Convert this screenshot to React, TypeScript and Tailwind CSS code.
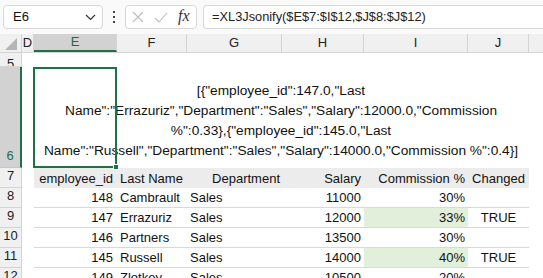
import React from "react";

const cols = [
  { key: "D", w: "w-[12px]" },
  { key: "E", w: "w-[83px]" },
  { key: "F", w: "w-[70px]" },
  { key: "G", w: "w-[95px]" },
  { key: "H", w: "w-[82px]" },
  { key: "I", w: "w-[104px]" },
  { key: "J", w: "w-[61px]" },
];

interface Row {
  n: number;
  id: string;
  last: string;
  dept: string;
  salary: string;
  pct: string;
  changed: string;
}

const rows: Row[] = [
  { n: 8, id: "148", last: "Cambrault", dept: "Sales", salary: "11000", pct: "30%", changed: "" },
  { n: 9, id: "147", last: "Errazuriz", dept: "Sales", salary: "12000", pct: "33%", changed: "TRUE" },
  { n: 10, id: "146", last: "Partners", dept: "Sales", salary: "13500", pct: "30%", changed: "" },
  { n: 11, id: "145", last: "Russell", dept: "Sales", salary: "14000", pct: "40%", changed: "TRUE" },
  { n: 12, id: "149", last: "Zlotkey", dept: "Sales", salary: "10500", pct: "20%", changed: "" },
];

const jsonLines = [
  '[{"employee_id":147.0,"Last',
  'Name":"Errazuriz","Department":"Sales","Salary":12000.0,"Commission',
  '%":0.33},{"employee_id":145.0,"Last',
  'Name":"Russell","Department":"Sales","Salary":14000.0,"Commission %":0.4}]',
];

function RowHead({ n, h, selected }: { n: number; h: string; selected?: boolean }) {
  return (
    <div
      className={`w-[22px] shrink-0 ${h} flex items-end justify-center pb-[2px] border-b border-r ${
        selected
          ? "bg-[#d2d2d2] text-[#1e6c41] border-b-[#c6c6c6] border-r-2 border-r-[#1e7145]"
          : "bg-[#f0f0f0] text-[#222] border-[#d4d4d4]"
      }`}
    >
      {n}
    </div>
  );
}

export default function App() {
  return (
    <div
      className="w-[543px] h-[278px] overflow-hidden bg-white text-[13px] text-[#111]"
      style={{ fontFamily: '"Liberation Sans", Arial, sans-serif' }}
    >
      {/* formula bar */}
      <div className="h-[34px] flex items-center bg-[#fafafa]">
        <div className="ml-[3px] w-[100px] h-[24px] border border-[#d8d8d8] rounded-[4px] bg-white flex items-center justify-between pl-[9px] pr-[6px]">
          <span>E6</span>
          <svg width="11" height="7" viewBox="0 0 11 7" fill="none" stroke="#333" strokeWidth="1.2">
            <path d="M1 1l4.5 4.5L10 1" />
          </svg>
        </div>
        <div className="w-[22px] flex flex-col items-center gap-[3px]">
          <span className="w-[2px] h-[2px] bg-[#444]" />
          <span className="w-[2px] h-[2px] bg-[#444]" />
          <span className="w-[2px] h-[2px] bg-[#444]" />
        </div>
        <div className="w-[72px] h-[24px] border border-[#d8d8d8] rounded-[4px] bg-white flex items-center pl-[6px] gap-[10px]">
          <svg width="12" height="12" viewBox="0 0 12 12" stroke="#bdbdbd" strokeWidth="1.1">
            <path d="M1 1l10 10M11 1L1 11" />
          </svg>
          <svg width="14" height="11" viewBox="0 0 14 11" fill="none" stroke="#bdbdbd" strokeWidth="1.1">
            <path d="M1 6l4 4 8-9" />
          </svg>
          <span
            className="italic text-[16px] text-[#333] -mt-[2px]"
            style={{ fontFamily: '"Liberation Serif", "Times New Roman", serif' }}
          >
            fx
          </span>
        </div>
        <div className="ml-[6px] flex-1 h-[24px] border border-r-0 border-[#d8d8d8] rounded-l-[4px] bg-white flex items-center pl-[8px] text-[12.8px] text-[#222]">
          =XL3Jsonify($E$7:$I$12,$J$8:$J$12)
        </div>
      </div>

      {/* column headers */}
      <div className="flex h-[19px] bg-[#f0f0f0] border-b border-[#d4d4d4]">
        <div className="w-[22px] shrink-0 border-r border-[#d4d4d4] flex items-end justify-end pr-[4px] pb-[2px]">
          <svg width="12" height="12" viewBox="0 0 12 12">
            <path d="M12 0V12H0Z" fill="#b5b5b5" />
          </svg>
        </div>
        {cols.map((c) => (
          <div
            key={c.key}
            className={`${c.w} shrink-0 flex items-center justify-center border-r border-[#d4d4d4] ${
              c.key === "E" ? "bg-[#d2d2d2] text-[#1e6c41] border-b-2 border-b-[#1e7145]" : "text-[#222]"
            }`}
          >
            {c.key}
          </div>
        ))}
        <div className="flex-1" />
      </div>

      {/* row 5 (partly scrolled) */}
      <div className="flex h-[14px]">
        <div className="w-[22px] shrink-0 bg-[#f0f0f0] border-r border-b border-[#d4d4d4] text-[#222] flex items-end justify-center overflow-hidden">
          <span className="leading-[13px] -mb-[4px]">5</span>
        </div>
        <div className="flex-1" />
      </div>

      {/* row 6 with JSON output */}
      <div className="flex h-[101px]">
        <RowHead n={6} h="h-[101px]" selected />
        <div className="w-[11px] shrink-0" />
        <div className="relative w-[496px] shrink-0 flex flex-col justify-end items-center pb-[7px] leading-[20px] text-[13.7px]">
          {jsonLines.map((l, i) => (
            <div key={i} className="whitespace-nowrap">
              {l}
            </div>
          ))}
          <div className="absolute left-0 top-0 w-[84px] h-[101px] border-2 border-[#1e7145]" />
          <div className="absolute left-[80px] top-[97px] w-[6px] h-[6px] bg-[#1e7145] border border-white" />
        </div>
      </div>

      {/* table header row 7 */}
      <div className="flex h-[20px]">
        <RowHead n={7} h="h-[20px]" />
        <div className="w-[12px] shrink-0" />
        <div className="flex bg-[#ececec] items-center pt-[2px]">
          <div className="w-[83px] text-right pr-[4px]">employee_id</div>
          <div className="w-[70px] pl-[3px]">Last Name</div>
          <div className="w-[95px] text-right pr-[2px]">Department</div>
          <div className="w-[82px] text-right pr-[3px]">Salary</div>
          <div className="w-[104px] text-right pr-[3px]">Commission %</div>
          <div className="w-[61px] text-center">Changed</div>
        </div>
      </div>

      {/* data rows */}
      {rows.map((r) => (
        <div key={r.n} className="flex h-[20px]">
          <RowHead n={r.n} h="h-[20px]" />
          <div className="w-[12px] shrink-0" />
          <div className="flex items-stretch border-b border-[#d9d9d9]">
            <div className="w-[83px] text-right pr-[4px] flex items-center justify-end">{r.id}</div>
            <div className="w-[70px] pl-[3px] flex items-center">{r.last}</div>
            <div className="w-[95px] pl-[3px] flex items-center">{r.dept}</div>
            <div className="w-[82px] pr-[3px] flex items-center justify-end">{r.salary}</div>
            <div
              className={`w-[104px] pr-[3px] flex items-center justify-end ${
                r.changed ? "bg-[#e2efda]" : ""
              }`}
            >
              {r.pct}
            </div>
            <div className="w-[61px] flex items-center justify-center">{r.changed}</div>
          </div>
        </div>
      ))}
    </div>
  );
}
